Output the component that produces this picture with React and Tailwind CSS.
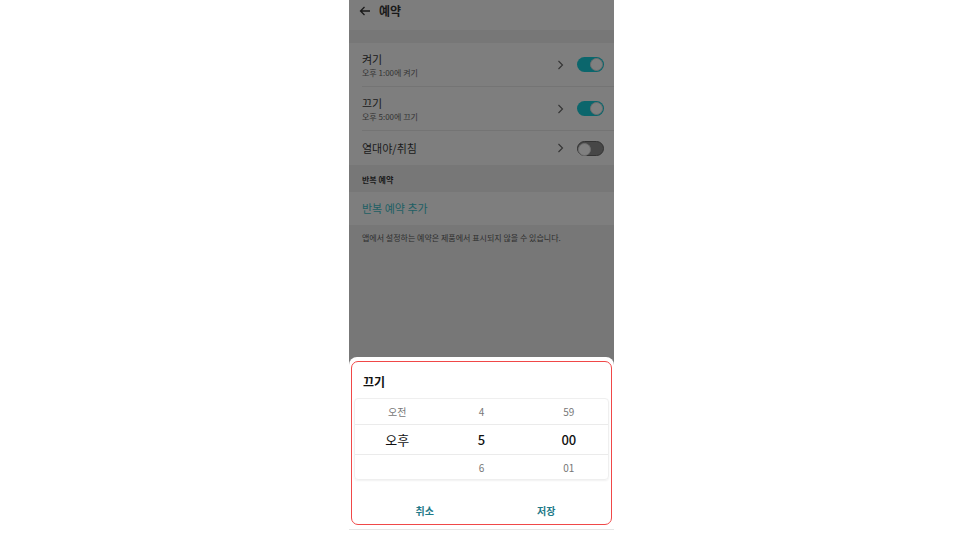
import React from "react";

const font = { fontFamily: '"Noto Sans CJK KR", "Noto Sans", Roboto, sans-serif' };

const Toggle = ({ on }) => (
  <div className={`w-[27px] h-[15px] rounded-full relative ${on ? "bg-[#0b666c]" : "bg-[#474747] border border-[#333]"}`}>
    <div className={`absolute top-[1px] w-[13px] h-[13px] rounded-full bg-[#808080] border border-[#6e6e6e] ${on ? "right-[1px]" : "left-[0px] top-[0px]"}`} />
  </div>
);

const Chevron = () => (
  <svg width="7" height="10" viewBox="0 0 7 10" fill="none" stroke="#333" strokeWidth="1.1">
    <path d="M1.5 1l4 4-4 4" />
  </svg>
);

const Row = ({ title, sub, on, last }) => (
  <div className={`flex items-center pr-[10px] ml-[13px] ${last ? "" : "border-b border-[#747474]"} ${sub ? "h-[44px]" : "h-[34px]"}`}>
    <div className="flex-1 flex flex-col justify-center">
      <div className="text-[11px] leading-[14px] text-[#1a1a1a]">{title}</div>
      {sub && <div className="text-[8px] leading-[11px] text-[#333] mt-[1px]">{sub}</div>}
    </div>
    <div className="mr-[13px]"><Chevron /></div>
    <Toggle on={on} />
  </div>
);

export default function App() {
  return (
    <div className="w-full h-[534px] bg-white" style={font}>
      <div className="w-[265px] h-[534px] mx-auto flex flex-col bg-[#777777]">
        {/* dimmed screen */}
        <div className="h-[357px] flex flex-col">
          <div className="h-[30px] flex items-start pt-[3px] pl-[10px] bg-[#7d7d7d]">
            <div className="h-[16px] flex items-center">
              <svg width="12" height="12" viewBox="0 0 12 12" fill="none" stroke="#1a1a1a" strokeWidth="1.3">
                <path d="M11 6H1.5M5.5 2L1.5 6l4 4" />
              </svg>
              <span className="ml-[8px] text-[12px] font-bold text-[#1a1a1a]">예약</span>
            </div>
          </div>
          <div className="h-[13px] bg-[#777777]" />
          <div className="bg-[#7e7e7e]">
            <Row title="켜기" sub="오후 1:00에 켜기" on />
            <Row title="끄기" sub="오후 5:00에 끄기" on />
            <Row title="열대야/취침" last />
          </div>
          <div className="h-[27px] flex items-end pb-[6px] pl-[13px] text-[8px] font-bold text-[#1a1a1a]">반복 예약</div>
          <div className="h-[33px] flex items-center pl-[13px] bg-[#7e7e7e] text-[11px] text-[#1d5f64]">반복 예약 추가</div>
          <div className="pl-[13px] pt-[7px] text-[8px] text-[#2e2e2e]">앱에서 설정하는 예약은 제품에서 표시되지 않을 수 있습니다.</div>
        </div>
        {/* bottom sheet */}
        <div className="flex-1 bg-white rounded-t-[8px] pt-[4px] px-[2px] flex flex-col">
          <div className="h-[164px] border-[1.5px] border-[#f04848] rounded-[7px] flex flex-col">
            <div className="h-[36px] flex items-center pt-[3px] pl-[11px] text-[12px] font-bold text-[#111]">끄기</div>
            <div className="mx-[2px] rounded-[4px] border border-[#efefef] shadow-[0_1px_2px_rgba(0,0,0,0.06)]">
              <div className="grid grid-cols-3 items-center h-[25px] text-[10px] text-[#777]">
                <div className="text-center">오전</div>
                <div className="text-center">4</div>
                <div className="text-center pl-[6px]">59</div>
              </div>
              <div className="grid grid-cols-3 items-center h-[31px] border-y border-[#ebebeb] text-[13px] text-[#111]">
                <div className="text-center">오후</div>
                <div className="text-center font-medium">5</div>
                <div className="text-center pl-[6px] font-medium">00</div>
              </div>
              <div className="grid grid-cols-3 items-center h-[24px] text-[10px] text-[#777]">
                <div className="text-center"></div>
                <div className="text-center">6</div>
                <div className="text-center pl-[6px]">01</div>
              </div>
            </div>
            <div className="flex-1 flex items-end pb-[6px]">
              <div className="flex-1 text-center text-[10px] font-bold text-[#1f7a89] pl-[12px]">취소</div>
              <div className="flex-1 text-center text-[10px] font-bold text-[#1f7a89] pr-[4px]">저장</div>
            </div>
          </div>
          <div className="h-[4px]" />
          <div className="h-[1px] bg-[#e6e6e6] -mx-[2px]" />
        </div>
      </div>
    </div>
  );
}
